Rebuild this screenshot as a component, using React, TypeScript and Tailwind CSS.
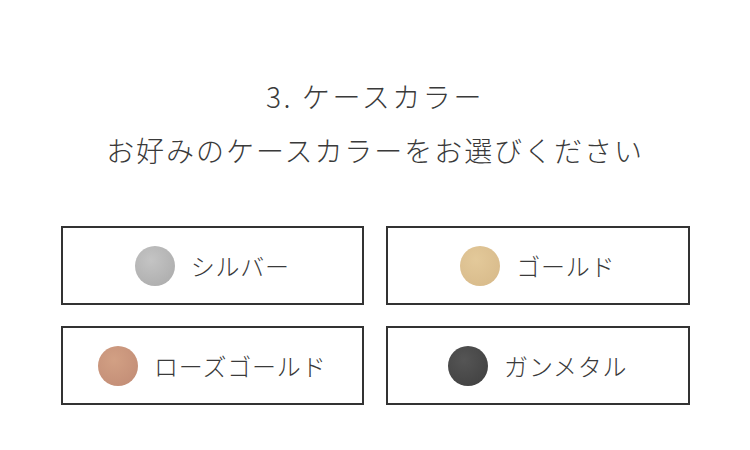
import React from "react";

const colors = [
  { name: "シルバー", swatch: "bg-[radial-gradient(circle_at_40%_35%,#c4c4c4,#a9a9a9)]" },
  { name: "ゴールド", swatch: "bg-[radial-gradient(circle_at_40%_35%,#e3c99a,#d6b888)]" },
  { name: "ローズゴールド", swatch: "bg-[radial-gradient(circle_at_40%_35%,#d2a084,#c08a74)]" },
  { name: "ガンメタル", swatch: "bg-[radial-gradient(circle_at_40%_35%,#555555,#3e3e3e)]" },
];

export default function App() {
  return (
    <div className="flex h-[450px] w-[750px] flex-col items-center bg-white pt-[76px] font-['Noto_Sans_CJK_JP','Noto_Sans',sans-serif] font-light text-[#3a3a3a]">
      <h2 className="text-[28px] leading-[40px] tracking-[2.6px]">3. ケースカラー</h2>
      <p className="mt-[14px] text-[28px] leading-[40px] tracking-[1.95px]">
        お好みのケースカラーをお選びください
      </p>
      <div className="mt-[56px] grid w-[629px] grid-cols-2 gap-x-[22px] gap-y-[21px]">
        {colors.map((c) => (
          <button
            key={c.name}
            className="flex h-[79px] items-center justify-center gap-[16px] border-2 border-[#333333] bg-white"
          >
            <span className={`h-[40px] w-[40px] rounded-full ${c.swatch}`} />
            <span className="text-[24px] leading-none tracking-[0.8px]">{c.name}</span>
          </button>
        ))}
      </div>
    </div>
  );
}
